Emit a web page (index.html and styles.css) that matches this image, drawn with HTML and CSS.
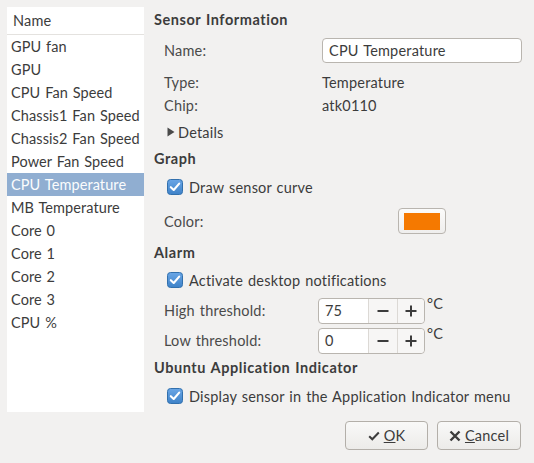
FILE: index.html
```html
<!DOCTYPE html>
<html>
<head>
<meta charset="utf-8">
<link rel="stylesheet" href="styles.css">
</head>
<body>
<div class="window">
  <div class="list">
    <div class="list-header">Name</div>
    <div class="row">GPU fan</div>
    <div class="row">GPU</div>
    <div class="row">CPU Fan Speed</div>
    <div class="row">Chassis1 Fan Speed</div>
    <div class="row">Chassis2 Fan Speed</div>
    <div class="row">Power Fan Speed</div>
    <div class="row selected">CPU Temperature</div>
    <div class="row">MB Temperature</div>
    <div class="row">Core 0</div>
    <div class="row">Core 1</div>
    <div class="row">Core 2</div>
    <div class="row">Core 3</div>
    <div class="row">CPU %</div>
  </div>
  <div class="panel">
    <div class="heading h-first">Sensor Information</div>
    <div class="field f-name">
      <span class="label">Name:</span>
      <div class="entry">CPU Temperature</div>
    </div>
    <div class="field f-type">
      <span class="label">Type:</span>
      <span class="value">Temperature</span>
    </div>
    <div class="field f-chip">
      <span class="label">Chip:</span>
      <span class="value">atk0110</span>
    </div>
    <div class="expander">
      <svg class="tri" width="8" height="10" viewBox="0 0 8 10"><path d="M0.5 0.5 L7.5 5 L0.5 9.5 Z" fill="#4a4a4a"/></svg>
      <span>Details</span>
    </div>
    <div class="heading h-graph">Graph</div>
    <div class="check c-draw">
      <svg class="cb" width="16" height="16" viewBox="0 0 16 16"><defs><linearGradient id="g1" x1="0" y1="0" x2="0" y2="1"><stop offset="0" stop-color="#6aa6e6"/><stop offset="1" stop-color="#3e82c8"/></linearGradient></defs><rect x="0.5" y="0.5" width="15" height="15" rx="3" fill="url(#g1)" stroke="#3270ad"/><path d="M3.8 8.2 L6.7 11 L12.2 4.6" fill="none" stroke="#fff" stroke-width="2.1" stroke-linecap="round" stroke-linejoin="round"/></svg>
      <span>Draw sensor curve</span>
    </div>
    <div class="field f-color">
      <span class="label">Color:</span>
      <div class="colorcell"><div class="colorbtn"><div class="swatch"></div></div></div>
    </div>
    <div class="heading h-alarm">Alarm</div>
    <div class="check c-act">
      <svg class="cb" width="16" height="16" viewBox="0 0 16 16"><defs><linearGradient id="g2" x1="0" y1="0" x2="0" y2="1"><stop offset="0" stop-color="#6aa6e6"/><stop offset="1" stop-color="#3e82c8"/></linearGradient></defs><rect x="0.5" y="0.5" width="15" height="15" rx="3" fill="url(#g2)" stroke="#3270ad"/><path d="M3.8 8.2 L6.7 11 L12.2 4.6" fill="none" stroke="#fff" stroke-width="2.1" stroke-linecap="round" stroke-linejoin="round"/></svg>
      <span>Activate desktop notifications</span>
    </div>
    <div class="spinrow s-high">
      <span class="label">High threshold:</span>
      <div class="spin"><span class="spinval">75</span><span class="spinbtn sb-minus"><svg width="12" height="12" viewBox="0 0 12 12"><path d="M0.5 6 H11.5" stroke="#3c3c3c" stroke-width="2"/></svg></span><span class="spinbtn sb-plus"><svg width="12" height="12" viewBox="0 0 12 12"><path d="M0.5 6 H11.5 M6 0.5 V11.5" stroke="#3c3c3c" stroke-width="2"/></svg></span></div>
      <span class="unit">°C</span>
    </div>
    <div class="spinrow s-low">
      <span class="label">Low threshold:</span>
      <div class="spin"><span class="spinval">0</span><span class="spinbtn sb-minus"><svg width="12" height="12" viewBox="0 0 12 12"><path d="M0.5 6 H11.5" stroke="#3c3c3c" stroke-width="2"/></svg></span><span class="spinbtn sb-plus"><svg width="12" height="12" viewBox="0 0 12 12"><path d="M0.5 6 H11.5 M6 0.5 V11.5" stroke="#3c3c3c" stroke-width="2"/></svg></span></div>
      <span class="unit">°C</span>
    </div>
    <div class="heading h-ubuntu">Ubuntu Application Indicator</div>
    <div class="check c-disp">
      <svg class="cb" width="16" height="16" viewBox="0 0 16 16"><defs><linearGradient id="g3" x1="0" y1="0" x2="0" y2="1"><stop offset="0" stop-color="#6aa6e6"/><stop offset="1" stop-color="#3e82c8"/></linearGradient></defs><rect x="0.5" y="0.5" width="15" height="15" rx="3" fill="url(#g3)" stroke="#3270ad"/><path d="M3.8 8.2 L6.7 11 L12.2 4.6" fill="none" stroke="#fff" stroke-width="2.1" stroke-linecap="round" stroke-linejoin="round"/></svg>
      <span>Display sensor in the Application Indicator menu</span>
    </div>
    <div class="buttons">
      <div class="btn b-ok"><svg width="12" height="10" viewBox="0 0 12 10"><path d="M1.2 5.2 L4.3 8.3 L10.8 1.5" fill="none" stroke="#3c3c3c" stroke-width="2"/></svg><span><u>O</u>K</span></div>
      <div class="btn b-cancel"><svg width="12" height="12" viewBox="0 0 12 12"><path d="M1.5 1.5 L10.5 10.5 M10.5 1.5 L1.5 10.5" fill="none" stroke="#3c3c3c" stroke-width="2.4"/></svg><span><u>C</u>ancel</span></div>
    </div>
  </div>
</div>
</body>
</html>
```
FILE: styles.css
```css
html, body {
  margin: 0;
  padding: 0;
}
body {
  background: #f2f1f0;
  font-family: "Lato", "Noto Sans", sans-serif;
  font-size: 14.5px;
  letter-spacing: 0.2px;
  word-spacing: 1px;
  color: #3c3c3c;
  width: 534px;
  height: 463px;
  overflow: hidden;
}
.window {
  display: flex;
  padding: 7px 0 0 7px;
}
.list {
  width: 137px;
  height: 405px;
  background: #fff;
  flex: none;
}
.list-header {
  height: 27px;
  line-height: 28px;
  padding-left: 6px;
  border-bottom: 1px solid #e4e2df;
  color: #3c3c3c;
}
.row {
  height: 23px;
  line-height: 23px;
  padding-left: 4px;
  white-space: nowrap;
  letter-spacing: 0.1px;
  word-spacing: 1px;
}
.row.selected {
  background: #90aed1;
  color: #fbfcfd;
}
.panel {
  margin-left: 10px;
  flex: 1;
  display: flex;
  flex-direction: column;
  padding-top: 3px;
  padding-right: 13px;
}
.heading {
  font-weight: bold;
  height: 20px;
  line-height: 20px;
  color: #3c3c3c;
  letter-spacing: 0.55px;
  word-spacing: 1px;
}
.h-graph { margin-top: 6px; }
.h-alarm { margin-top: 9px; }
.h-ubuntu { margin-top: 4px; }
.field {
  display: grid;
  grid-template-columns: 158px 1fr;
  align-items: center;
  padding-left: 10px;
}
.label { color: #4a4a4a; }
.f-name { margin-top: 8px; height: 25px; }
.f-type { margin-top: 8px; height: 23px; }
.f-chip { height: 23px; }
.entry {
  height: 23px;
  line-height: 23px;
  border: 1px solid #b9b5af;
  border-radius: 4px;
  background: #fff;
  padding-left: 6px;
  margin-right: -1px;
}
.expander {
  margin-top: 4px;
  height: 22px;
  display: flex;
  align-items: center;
  padding-left: 13px;
  gap: 3px;
}
.check {
  display: flex;
  align-items: center;
  height: 20px;
  padding-left: 13px;
  gap: 6px;
}
.c-draw { margin-top: 8px; }
.c-act { margin-top: 7px; }
.c-disp { margin-top: 8px; }
.cb { flex: none; }
.f-color { margin-top: 11px; height: 26px; }
.colorcell {
  display: flex;
  justify-content: center;
}
.colorbtn {
  width: 46px;
  height: 24px;
  border: 1px solid #b9b5af;
  border-radius: 4px;
  background: linear-gradient(#fbfbfa, #efeeed);
  display: flex;
  align-items: center;
  justify-content: center;
}
.swatch {
  width: 36px;
  height: 17px;
  background: #f57900;
}
.spinrow {
  display: flex;
  align-items: flex-start;
  padding-left: 10px;
  height: 26px;
}
.s-high { margin-top: 8px; }
.s-low { margin-top: 4px; }
.spinrow .label {
  width: 154px;
  line-height: 26px;
}
.spin {
  width: 105px;
  height: 24px;
  border: 1px solid #b9b5af;
  border-radius: 4px;
  background: #fff;
  display: flex;
}
.spinval {
  width: 44px;
  padding-left: 6px;
  line-height: 24px;
}
.spinbtn {
  border-left: 1px solid #dcd9d5;
  display: flex;
  align-items: center;
  justify-content: center;
  background: #f7f6f5;
}
.sb-minus { width: 28px; }
.sb-plus { width: 27px; border-radius: 0 4px 4px 0; }
.unit {
  margin-left: 2px;
  line-height: 14px;
  margin-top: -1px;
  word-spacing: 0;
}
.buttons {
  margin-top: 15px;
  display: flex;
  justify-content: flex-end;
  gap: 9px;
}
.btn {
  height: 27px;
  border: 1px solid #b3afa9;
  border-radius: 4px;
  background: linear-gradient(#f9f9f8, #ecebe9);
  display: flex;
  align-items: center;
  justify-content: center;
  gap: 4px;
}
.b-ok { width: 81px; }
.b-cancel { width: 82px; }
```
